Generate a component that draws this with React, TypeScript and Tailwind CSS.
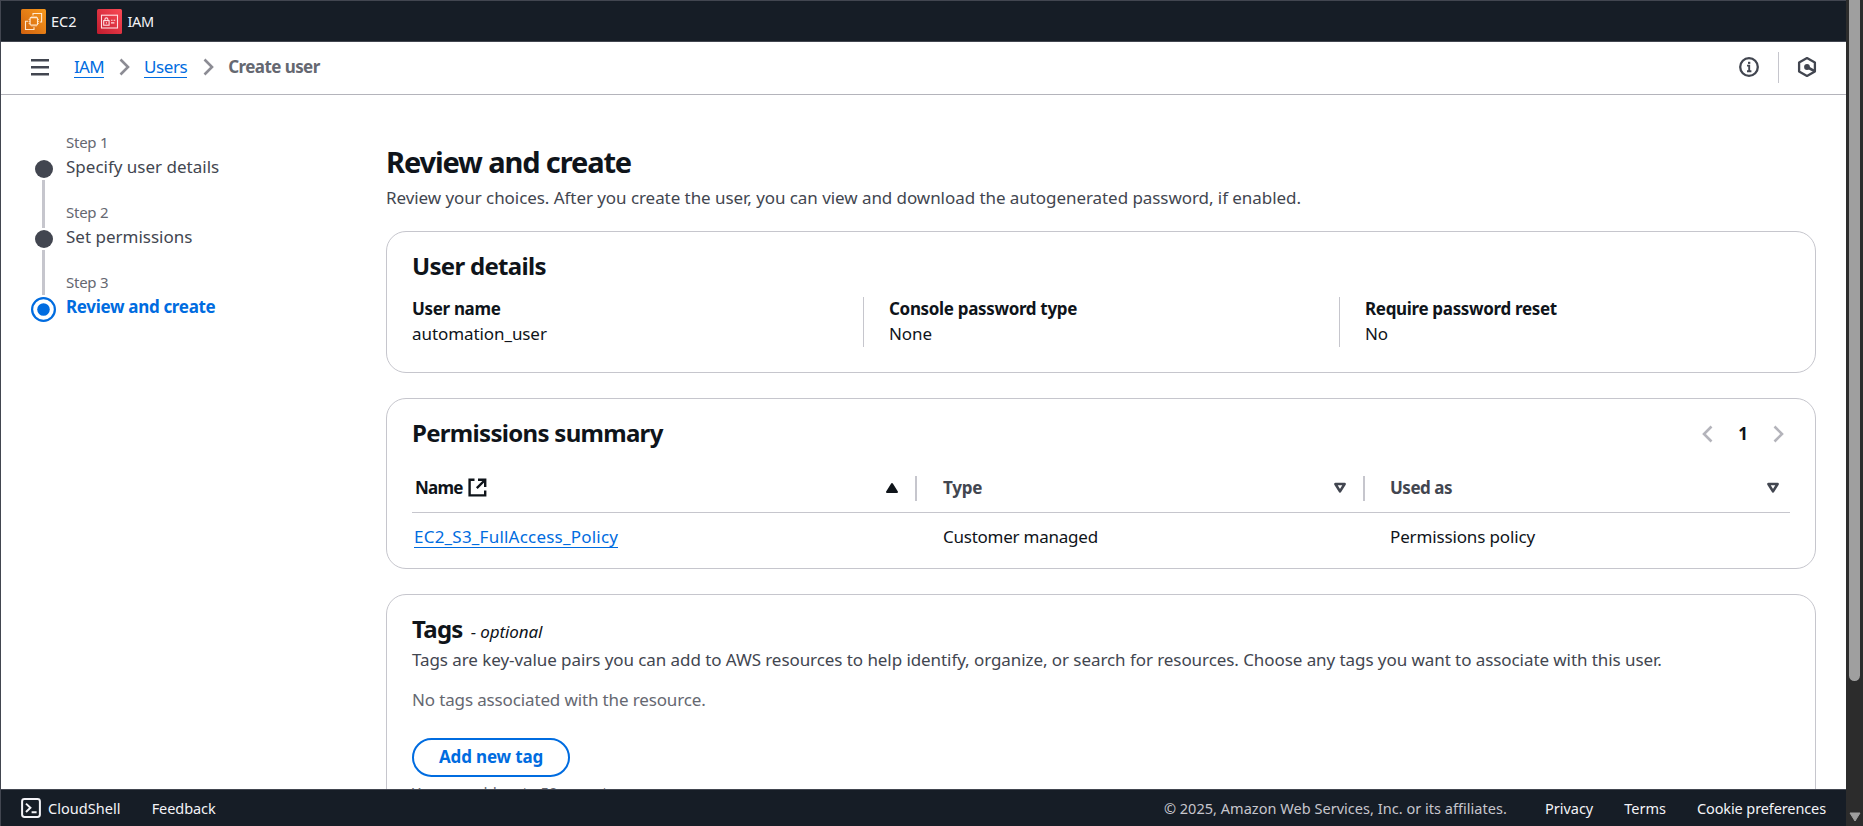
import type { ReactNode } from 'react';

function Ec2Icon() {
  return (
    <svg width="25" height="25" viewBox="0 0 25 25" fill="none" className="shrink-0">
      <defs>
        <linearGradient id="ec2" x1="0" y1="25" x2="25" y2="0" gradientUnits="userSpaceOnUse">
          <stop stopColor="#d0610f" />
          <stop offset="1" stopColor="#f8991c" />
        </linearGradient>
      </defs>
      <rect width="25" height="25" rx="1.5" fill="url(#ec2)" />
      <g stroke="#ffe9cf" strokeWidth="1.1">
        <rect x="9.1" y="8.6" width="7.4" height="7.4" rx="0.8" />
        <path d="M11 7v1.6M13 7v1.6M15 7v1.6M11 16v1.6M13 16v1.6M15 16v1.6M7.6 10.4h1.5M7.6 12.4h1.5M7.6 14.4h1.5M16.5 10.4H18M16.5 12.4H18M16.5 14.4H18" strokeWidth="0.8" />
        <path d="M12 6.6V4.5h8.6V13h-1.8M7 12.3H4.5v8.2H13v-2.2" />
      </g>
    </svg>
  );
}

function IamIcon() {
  return (
    <svg width="25" height="25" viewBox="0 0 25 25" fill="none" className="shrink-0">
      <defs>
        <linearGradient id="iam" x1="0" y1="25" x2="25" y2="0" gradientUnits="userSpaceOnUse">
          <stop stopColor="#c01c2e" />
          <stop offset="1" stopColor="#fb4a55" />
        </linearGradient>
      </defs>
      <rect width="25" height="25" rx="1.5" fill="url(#iam)" />
      <g stroke="#ffdfe2" strokeWidth="1.1">
        <rect x="4.5" y="6.2" width="16" height="12.8" />
        <rect x="6.7" y="11.6" width="5.4" height="4.6" />
        <path d="M7.9 11.6v-1.2a1.5 1.5 0 0 1 3 0v1.2M9.4 13.2v1.4M14 11.2h1.6M16.6 11.2h1.6M14 13.9h3.4" />
      </g>
    </svg>
  );
}

function Chevron({ left = false, className }: { left?: boolean; className: string }) {
  return (
    <svg width="11" height="18" viewBox="0 0 11 18" fill="none" className={className}>
      <path d={left ? 'M9.5 1.5 2 9l7.5 7.5' : 'M1.5 1.5 9 9l-7.5 7.5'} stroke="currentColor" strokeWidth="2.6" />
    </svg>
  );
}

function SortIcon({ active = false }: { active?: boolean }) {
  return active ? (
    <svg width="14" height="12" viewBox="0 0 14 12" className="text-[#0f141a]">
      <path d="M7 2 12 10H2Z" fill="currentColor" stroke="currentColor" strokeWidth="2" strokeLinejoin="round" />
    </svg>
  ) : (
    <svg width="14" height="12" viewBox="0 0 14 12" className="text-[#424650]">
      <path d="M2.4 2h9.2L7 9.4Z" fill="none" stroke="currentColor" strokeWidth="2.6" strokeLinejoin="round" />
    </svg>
  );
}

function Step({ n, title, active = false }: { n: number; title: string; active?: boolean }) {
  return (
    <li className="flex h-[70px] gap-[10px]">
      <div className="flex w-[25px] flex-col items-center">
        {active ? (
          <svg width="25" height="25" viewBox="0 0 25 25" className="mt-[28px] shrink-0">
            <circle cx="12.5" cy="12.5" r="11.4" fill="none" stroke="#006ce0" strokeWidth="2.2" />
            <circle cx="12.5" cy="12.5" r="6.3" fill="#006ce0" />
          </svg>
        ) : (
          <>
            <div className="mt-[31px] size-[18px] shrink-0 rounded-full bg-[#424650]" />
            <div className={n === 1 ? 'mt-[2px] -mb-[29px] w-[3px] flex-1 bg-[#c6c6cd]' : 'mt-[2px] -mb-[26px] w-[3px] flex-1 bg-[#c6c6cd]'} />
          </>
        )}
      </div>
      <div className="pt-[1px]">
        <div className="text-[15px] leading-[25px] tracking-[-0.25px] text-[#656871]">Step {n}</div>
        <div className={active ? '-mt-px leading-[25px] font-bold tracking-[-0.32px] text-[#006ce0]' : '-mt-px leading-[25px] text-[#424650]'}>{title}</div>
      </div>
    </li>
  );
}

function Card({ className, children }: { className: string; children: ReactNode }) {
  return <section className={`rounded-[20px] border border-[#c6c6cd] bg-white px-[25px] ${className}`}>{children}</section>;
}

function Heading({ children }: { children: ReactNode }) {
  return <h2 className="text-[24px] leading-[30px] font-bold tracking-[-0.7px]">{children}</h2>;
}

function Detail({ label, value, first = false }: { label: string; value: string; first?: boolean }) {
  return (
    <div className={first ? 'h-[50px] w-[451px] shrink-0' : 'h-[50px] w-[476px] shrink-0 border-l border-[#c6c6cd] pl-[25px]'}>
      <div className="-mt-px leading-[25px] font-bold tracking-[-0.33px]">{label}</div>
      <div className="leading-[25px] tracking-[-0.08px]">{value}</div>
    </div>
  );
}

function TopBar() {
  return (
    <nav className="flex h-[41px] shrink-0 items-center gap-[20px] border-b border-[#424650] bg-[#161d26] pl-[20px] text-[14.5px] text-[#f3f3f7]">
      <div className="flex items-center gap-[5px]">
        <Ec2Icon />
        <span className="pt-px">EC2</span>
      </div>
      <div className="flex items-center gap-[6px]">
        <IamIcon />
        <span className="pt-px tracking-[-0.4px]">IAM</span>
      </div>
    </nav>
  );
}

function Breadcrumbs() {
  return (
    <header className="flex h-[53px] shrink-0 items-center border-b border-[#b4b4bb] pr-[29px] pb-[2px] pl-[30px]">
      <svg width="18" height="18" viewBox="0 0 18 18" className="text-[#424650]">
        <path d="M0 2.2h18M0 9.2h18M0 16.2h18" stroke="currentColor" strokeWidth="2.5" />
      </svg>
      <a className="ml-[25px] border-b border-[#006ce0] leading-[20px] tracking-[-0.65px] text-[#006ce0]">IAM</a>
      <Chevron className="ml-[15px] text-[#8c8c94]" />
      <a className="ml-[14px] border-b border-[#006ce0] leading-[20px] tracking-[-0.45px] text-[#006ce0]">Users</a>
      <Chevron className="ml-[16px] text-[#8c8c94]" />
      <span className="ml-[14px] font-bold tracking-[-0.57px] text-[#656871]">Create user</span>
      <div className="ml-auto flex items-center">
        <svg width="20" height="20" viewBox="0 0 20 20" fill="none" className="text-[#424650]">
          <circle cx="10" cy="10" r="8.8" stroke="currentColor" strokeWidth="2.3" />
          <path d="M10.2 15V8.6H8M8 14.2h4.4" stroke="currentColor" strokeWidth="1.9" />
          <path d="M9 4.8h2.3v2.1H9Z" fill="currentColor" />
        </svg>
        <div className="ml-[19px] h-[31px] w-px bg-[#c6c6cd]" />
        <svg width="20" height="22" viewBox="0 0 20 22" fill="none" className="ml-[18px] text-[#424650]">
          <path d="M10 2.1 17.9 6.4v9.2L10 19.9 2.1 15.6V6.4Z" stroke="currentColor" strokeWidth="2.3" strokeLinejoin="round" />
          <circle cx="10" cy="11" r="2.9" fill="currentColor" />
          <path d="m10 11 7.6 4.2" stroke="currentColor" strokeWidth="2.6" />
        </svg>
      </div>
    </header>
  );
}

function PermissionsTable() {
  return (
    <div>
      <div className="flex h-[50px] items-center border-b border-[#c6c6cd] pr-[10px] pl-[3px] font-bold text-[#424650]">
        <div className="flex w-[500px] items-center text-[#0f141a]">
          <span className="tracking-[-0.8px]">Name</span>
          <svg width="19" height="19" viewBox="0 0 19 19" fill="none" className="ml-[5px]">
            <path d="M6.5 1.8H1.6v15.6h15.6v-5" stroke="currentColor" strokeWidth="2.4" />
            <path d="M10 1.8h7.2V9M17 2 8.8 10.2" stroke="currentColor" strokeWidth="2.4" />
          </svg>
          <span className="mr-[16px] ml-auto pt-px"><SortIcon active /></span>
        </div>
        <div className="mt-px h-[25px] w-[2px] bg-[#c6c6cd]" />
        <div className="flex w-[446px] items-center pl-[26px]">
          <span className="tracking-[-0.2px]">Type</span>
          <span className="mr-[16px] ml-auto pt-px"><SortIcon /></span>
        </div>
        <div className="mt-px h-[25px] w-[2px] bg-[#c6c6cd]" />
        <div className="flex flex-1 items-center pl-[25px]">
          <span className="tracking-[-0.49px]">Used as</span>
          <span className="ml-auto pt-px"><SortIcon /></span>
        </div>
      </div>
      <div className="flex items-start pt-[13px] pl-[2px] leading-[22px]">
        <div className="w-[529px]">
          <a className="inline-block h-[22px] border-b border-[#006ce0] tracking-[0.22px] text-[#006ce0]">EC2_S3_FullAccess_Policy</a>
        </div>
        <div className="w-[447px] tracking-[-0.24px]">Customer managed</div>
        <div className="tracking-[-0.14px]">Permissions policy</div>
      </div>
    </div>
  );
}

function Footer() {
  return (
    <footer className="flex h-[37px] shrink-0 items-center border-t border-[#424650] bg-[#161d26] pt-px pr-[20px] pl-[20px] text-[14.5px] text-[#f3f3f7]">
      <svg width="20" height="20" viewBox="0 0 20 20" fill="none" className="-mt-px">
        <rect x="1.1" y="1.1" width="17.8" height="17.8" rx="2.4" stroke="currentColor" strokeWidth="2" />
        <path d="m5 5.6 4.4 4.2L5 14M10.6 14.2h5" stroke="currentColor" strokeWidth="2" />
      </svg>
      <span className="ml-[7px] tracking-[0.05px]">CloudShell</span>
      <span className="ml-[31px] tracking-[-0.07px]">Feedback</span>
      <span className="ml-auto tracking-[0.03px] text-[#c6c6cd]">© 2025, Amazon Web Services, Inc. or its affiliates.</span>
      <span className="ml-[38px]">Privacy</span>
      <span className="ml-[31px]">Terms</span>
      <span className="ml-[31px] tracking-[-0.11px]">Cookie preferences</span>
    </footer>
  );
}

export default function App() {
  return (
    <div className="flex h-[826px] w-[1863px] overflow-hidden bg-white font-['Noto_Sans',sans-serif] text-[17px] text-[#0f141a]">
      <div className="flex w-[1846px] flex-col border-t border-l border-[#424650]">
        <TopBar />
        <Breadcrumbs />
        <div className="flex min-h-0 flex-1 overflow-hidden">
          <ol className="w-[385px] shrink-0 pt-[34px] pl-[30px]">
            <Step n={1} title="Specify user details" />
            <Step n={2} title="Set permissions" />
            <Step n={3} title="Review and create" active />
          </ol>
          <main className="w-[1430px] shrink-0 pt-[48px]">
            <h1 className="text-[29px] leading-[37px] font-bold tracking-[-1.12px]">Review and create</h1>
            <p className="mt-[5px] leading-[25px] tracking-[-0.06px] text-[#424650]">
              Review your choices. After you create the user, you can view and download the autogenerated password, if enabled.
            </p>

            <Card className="mt-[21px] h-[142px] pt-[19px]">
              <Heading>User details</Heading>
              <div className="mt-[16px] flex">
                <Detail first label="User name" value="automation_user" />
                <Detail label="Console password type" value="None" />
                <Detail label="Require password reset" value="No" />
              </div>
            </Card>

            <Card className="mt-[25px] h-[171px] pt-[19px]">
              <div className="flex h-[45px] items-start justify-between pr-[6px]">
                <Heading>Permissions summary</Heading>
                <div className="flex h-[32px] items-center text-[#b4b4bb]">
                  <Chevron left className="" />
                  <span className="w-[60px] text-center font-bold text-[#0f141a]">1</span>
                  <Chevron className="" />
                </div>
              </div>
              <PermissionsTable />
            </Card>

            <Card className="mt-[25px] h-[300px] pt-[19px]">
              <div className="flex items-baseline gap-[8px]">
                <Heading>Tags</Heading>
                <span className="tracking-[-0.1px] italic">- optional</span>
              </div>
              <p className="mt-[2px] leading-[25px] tracking-[-0.07px] text-[#424650]">
                Tags are key-value pairs you can add to AWS resources to help identify, organize, or search for resources. Choose any tags you want to associate with this user.
              </p>
              <p className="mt-[15px] leading-[25px] tracking-[-0.14px] text-[#656871]">No tags associated with the resource.</p>
              <button className="mt-[26px] flex h-[39px] w-[158px] items-center justify-center rounded-full border-2 border-[#006ce0] font-bold tracking-[-0.16px] text-[#006ce0]">
                Add new tag
              </button>
              <p className="mt-[5px] text-[15px] leading-[20px] tracking-[-0.1px] text-[#656871]">You can add up to 50 more tags.</p>
            </Card>
          </main>
        </div>
        <Footer />
      </div>
      <div className="flex w-[17px] flex-col items-center justify-between bg-[#2c2c2c]">
        <div className="h-[681px] w-[11px] rounded-b-full bg-[#9f9f9f]" />
        <svg width="12" height="10" viewBox="0 0 12 10" className="mb-[4px]">
          <path d="M1 1h10L6 9Z" fill="#9f9f9f" stroke="#9f9f9f" strokeLinejoin="round" />
        </svg>
      </div>
    </div>
  );
}
